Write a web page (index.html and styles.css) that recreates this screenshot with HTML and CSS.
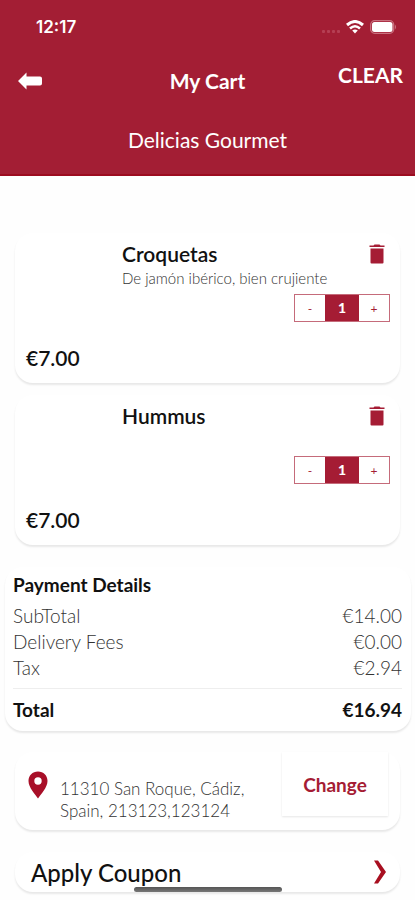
FILE: index.html
```html
<!DOCTYPE html>
<html lang="en">
<head>
    <meta charset="UTF-8">
    <meta name="viewport" content="width=device-width, initial-scale=1.0">
    <title>My Cart</title>
    <link rel="stylesheet" href="styles.css">
</head>
<body>
    <header class="header">
        <div class="status-bar">
            <span class="time">12:17</span>
            <div class="status-icons">
                <span class="signal"><i></i><i></i><i></i><i></i></span>
                <svg class="wifi" width="18" height="14" viewBox="0 0 18 14" fill="none" stroke="#fff" stroke-width="3">
                    <path d="M1 5 Q9 -2 17 5"/>
                    <path d="M4 8.500 Q9 4 14 8.500" stroke-width="2.500"/>
                    <path d="M9 13.500 L6.200 10.600 Q9 8.600 11.800 10.600 Z" fill="#fff" stroke="none"/>
                </svg>
                <svg width="27" height="14" viewBox="0 0 27 14">
                    <rect x="0.700" y="0.700" width="23" height="12.600" rx="4" fill="none" stroke="#c9717f" stroke-width="1.300"/>
                    <rect x="2" y="2" width="20.500" height="10" rx="2.500" fill="#fff"/>
                    <path d="M25 4.500 q2 2.500 0 5z" fill="#c9717f"/>
                </svg>
            </div>
        </div>

        <div class="title-bar">
            <button type="button" class="back" aria-label="Back">
                <svg width="24" height="18" viewBox="0 0 24 18" fill="#fff">
                    <path d="M0 9 L8.500 0.500 V4.500 H22 Q24 4.500 24 6.500 V11.500 Q24 13.500 22 13.500 H8.500 V17.500 Z"/>
                </svg>
            </button>
            <h1>My Cart</h1>
            <button type="button" class="clear">CLEAR</button>
        </div>
        <p class="restaurant">Delicias Gourmet</p>
    </header>

    <main class="cart">
        <section class="card item">
            <div class="item-top">
                <h2>Croquetas</h2>
                <button type="button" class="delete" aria-label="Delete Croquetas">
                    <svg width="16" height="20" viewBox="0 0 16 20" fill="#a51c34">
                        <path d="M0.500 1.500 H4.500 L5.500 0.500 H10.500 L11.500 1.500 H15.500 V3 H0.500 Z"/>
                        <path d="M1.500 4.500 H14.500 V18.500 Q14.500 19.500 13.500 19.500 H2.500 Q1.500 19.500 1.500 18.500 Z"/>
                    </svg>
                </button>
            </div>
            <p class="description">De jamón ibérico, bien crujiente</p>
            <div class="quantity">
                <button type="button">-</button>
                <span>1</span>
                <button type="button">+</button>
            </div>
            <p class="price">€7.00</p>
        </section>

        <section class="card item">
            <div class="item-top">
                <h2>Hummus</h2>
                <button type="button" class="delete" aria-label="Delete Hummus">
                    <svg width="16" height="20" viewBox="0 0 16 20" fill="#a51c34">
                        <path d="M0.500 1.500 H4.500 L5.500 0.500 H10.500 L11.500 1.500 H15.500 V3 H0.500 Z"/>
                        <path d="M1.500 4.500 H14.500 V18.500 Q14.500 19.500 13.500 19.500 H2.500 Q1.500 19.500 1.500 18.500 Z"/>
                    </svg>
                </button>
            </div>
            <p class="description"></p>
            <div class="quantity">
                <button type="button">-</button>
                <span>1</span>
                <button type="button">+</button>
            </div>
            <p class="price">€7.00</p>
        </section>

        <section class="card payment">
            <h2>Payment Details</h2>
            <table>
                <tbody>
                    <tr>
                        <th>SubTotal</th>
                        <td>€14.00</td>
                    </tr>
                    <tr>
                        <th>Delivery Fees</th>
                        <td>€0.00</td>
                    </tr>
                    <tr>
                        <th>Tax</th>
                        <td>€2.94</td>
                    </tr>
                </tbody>
                <tfoot>
                    <tr>
                        <th>Total</th>
                        <td>€16.94</td>
                    </tr>
                </tfoot>
            </table>
        </section>

        <section class="card address">
            <svg class="pin" width="20" height="28" viewBox="0 0 20 28" fill="#a80f28">
                <path fill-rule="evenodd" d="M10 0.500 C4.500 0.500 0.500 4.500 0.500 10 C0.500 16.500 7 23 10 27.500 C13 23 19.500 16.500 19.500 10 C19.500 4.500 15.500 0.500 10 0.500 Z M10 6.300 A3.700 3.700 0 1 1 10 13.700 A3.700 3.700 0 1 1 10 6.300 Z"/>
            </svg>
            <p>11310 San Roque, Cádiz, Spain, 213123,123124</p>
            <button type="button" class="change">Change</button>
        </section>

        <button type="button" class="card coupon">
            <span>Apply Coupon</span>
            <svg width="14" height="24" viewBox="0 0 14 24" fill="#a80f20">
                <path d="M1 0.500 H5 L13 12 L5 23.500 H1 L8 12 Z"/>
            </svg>
        </button>
    </main>

    <div class="home-indicator"></div>
</body>
</html>
```
FILE: styles.css
```css
* {
    box-sizing: border-box;
}

body {
    font-family: Lato, "Open Sans", sans-serif;
    background-color: #fefefe;
    color: #111;
    margin: 0;
}

h1, h2, p {
    margin: 0;
}

button {
    font-family: inherit;
    background: none;
    border: none;
    padding: 0;
    cursor: pointer;
}

svg {
    display: block;
}

/* header */
.header {
    background-color: #a31e34;
    border-bottom: 2px solid #9c0c20;
    color: #fff;
    padding: 16px 12px 20px;
}

.status-bar {
    display: flex;
    justify-content: space-between;
    align-items: center;
    height: 22px;
    padding: 0 6px 0 24px;
}

.time {
    font-family: Inter, sans-serif;
    font-size: 17px;
    font-weight: 600;
}

.status-icons {
    display: flex;
    align-items: center;
    gap: 6px;
}

.signal {
    display: flex;
    gap: 2px;
    padding-top: 8px;
}

.signal i {
    width: 3px;
    height: 3px;
    border-radius: 1px;
    background-color: #b53f53;
}

.title-bar {
    display: grid;
    grid-template-columns: 1fr auto 1fr;
    align-items: center;
    height: 42px;
    margin-top: 22px;
}

.title-bar h1 {
    font-size: 21px;
    line-height: 28px;
}

.back {
    justify-self: start;
    margin-left: 6px;
}

.clear {
    justify-self: end;
    align-self: start;
    color: #fff;
    font-size: 21px;
    font-weight: bold;
    line-height: 30px;
}

.restaurant {
    font-size: 21px;
    line-height: 28px;
    text-align: center;
    margin-top: 24px;
}

/* cards */
.cart {
    display: flex;
    flex-direction: column;
    padding: 57px 15px 8px;
}

.card {
    background-color: #fff;
    border-radius: 18px;
    box-shadow: 0 2px 2px rgba(0, 0, 0, 0.09);
}

.item {
    height: 150px;
    margin-bottom: 12px;
    padding: 7px 10px 10px 107px;
}

.item-top {
    display: flex;
    justify-content: space-between;
    align-items: center;
    padding-right: 5px;
}

.item h2 {
    font-size: 21px;
    font-weight: 600;
    line-height: 28px;
}

.description {
    height: 20px;
    color: #333;
    font-size: 15px;
    font-weight: 300;
    line-height: 20px;
}

.quantity {
    display: flex;
    width: 96px;
    height: 28px;
    margin: 6px 0 0 auto;
    border: 1px solid #c56b7a;
    color: #a51c34;
    font-size: 12px;
    line-height: 26px;
    text-align: center;
}

.quantity button {
    flex: 1;
    color: #a51c34;
    font-size: 12px;
}

.quantity span {
    width: 34px;
    background-color: #a51c34;
    color: #fff;
    font-size: 14px;
    font-weight: 900;
}

.price {
    font-size: 21px;
    font-weight: 600;
    line-height: 28px;
    margin: 22px 0 0 -96px;
}

.payment {
    margin: 10px -11px 0 -10px;
    padding: 4px 9px 8px 8px;
}

.payment h2 {
    font-size: 19px;
    line-height: 28px;
    margin-bottom: 4px;
}

.payment table {
    width: 100%;
    border-collapse: collapse;
    font-size: 19px;
    line-height: 26px;
}

.payment th,
.payment td {
    padding: 0;
    color: #333;
    font-weight: 300;
    text-align: left;
}

.payment td {
    text-align: right;
}

.payment tbody tr:last-child > * {
    padding-bottom: 7px;
}

.payment tfoot th,
.payment tfoot td {
    border-top: 1px solid #eee;
    padding-top: 8px;
    color: #111;
    font-weight: bold;
}

.address {
    display: flex;
    align-items: flex-start;
    height: 78px;
    margin-top: 21px;
    padding: 0 12px 0 13px;
}

.pin {
    margin-top: 19px;
}

.address p {
    flex: 1;
    color: #333;
    font-size: 17px;
    font-weight: 300;
    line-height: 22px;
    margin: 26px 16px 0 12px;
}

.change {
    width: 106px;
    height: 64px;
    background-color: #fff;
    box-shadow: 0 1px 2px rgba(0, 0, 0, 0.1);
    color: #a51c34;
    font-size: 19px;
    font-weight: bold;
}

.coupon {
    display: flex;
    justify-content: space-between;
    align-items: center;
    height: 40px;
    margin-top: 22px;
    padding: 0 13px 0 16px;
    color: #111;
    font-size: 24px;
    font-weight: 500;
}

.home-indicator {
    position: fixed;
    bottom: 8px;
    left: 50%;
    width: 148px;
    height: 5px;
    margin-left: -74px;
    border-radius: 3px;
    background: linear-gradient(#555, #777);
}
```
